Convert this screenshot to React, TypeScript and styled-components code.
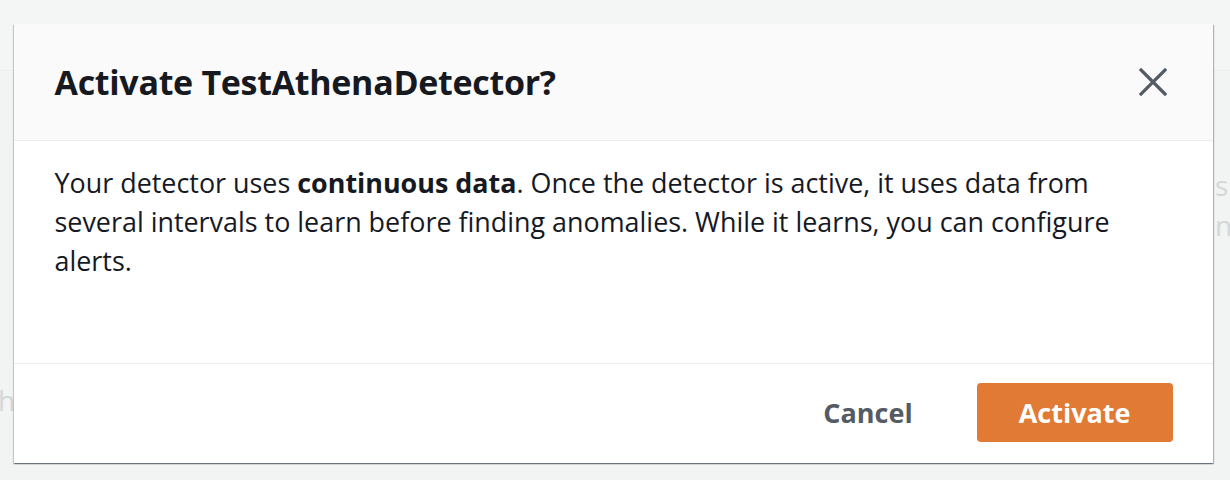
import React from "react";
import styled, { createGlobalStyle } from "styled-components";

const GlobalStyle = createGlobalStyle`
  html, body { margin: 0; padding: 0; }
  body {
    width: 1230px;
    height: 480px;
    overflow: hidden;
    background: #f2f3f3;
    font-family: "Open Sans", "Noto Sans", "Liberation Sans", sans-serif;
  }
`;

const Page = styled.div`
  position: relative;
  width: 1230px;
  height: 480px;
  overflow: hidden;
  background: #f2f3f3;
`;

const BackdropTop = styled.div`
  height: 70px;
  background: #f4f5f5;
  border-bottom: 1px solid #eceeee;
`;

const BackdropLines = styled.div`
  display: flex;
  flex-direction: column;
  padding: 96px 0 0 1215px;
  gap: 4px;
  font-size: 28px;
  line-height: 36px;
  color: #d3d7d7;
  white-space: nowrap;
`;

const BackdropLeft = styled.div`
  padding: 138px 0 0 0;
  margin-left: -2px;
  font-size: 28px;
  color: #d3d7d7;
`;

const Overlay = styled.div`
  position: absolute;
  inset: 0;
  display: flex;
  justify-content: center;
  padding-top: 24px;
`;

const Modal = styled.div`
  width: 1199px;
  height: 439px;
  margin-left: -4px;
  display: flex;
  flex-direction: column;
  background: #ffffff;
  box-shadow: 0 1px 1px 0 rgba(0, 28, 36, 0.35), 1px 1px 1px 0 rgba(0, 28, 36, 0.25),
    -1px 1px 1px 0 rgba(0, 28, 36, 0.15);
`;

const Header = styled.div`
  display: flex;
  align-items: center;
  justify-content: space-between;
  height: 117px;
  box-sizing: border-box;
  padding: 0 44px 0 41px;
  background: #fafafa;
  border-bottom: 1px solid #eaeded;
`;

const Title = styled.h2`
  margin: 0;
  font-size: 34px;
  line-height: 44px;
  font-weight: 700;
  color: #16191f;
  letter-spacing: -0.3px;
`;

const CloseButton = styled.button`
  display: flex;
  align-items: center;
  justify-content: center;
  width: 32px;
  height: 32px;
  padding: 0;
  border: none;
  background: transparent;
  cursor: pointer;
  color: #545b64;
`;

const Body = styled.div`
  flex: 1;
  padding: 22px 41px 0 41px;
  border-bottom: 1px solid #eaeded;
`;

const Text = styled.p`
  margin: 0;
  font-size: 26.9px;
  line-height: 39px;
  color: #16191f;
  max-width: 1110px;
  b { font-weight: 700; }
`;

const Footer = styled.div`
  display: flex;
  justify-content: flex-end;
  align-items: center;
  height: 99px;
  box-sizing: border-box;
  padding: 0 40px 2px 41px;
  gap: 24px;
`;

const Button = styled.button<{ $primary?: boolean }>`
  height: 59px;
  box-sizing: border-box;
  padding: 0 ${(p) => (p.$primary ? "42px" : "40px")};
  min-width: ${(p) => (p.$primary ? "195px" : "auto")};
  border: none;
  border-radius: 4px;
  font-family: inherit;
  font-size: 27px;
  font-weight: 700;
  cursor: pointer;
  background: ${(p) => (p.$primary ? "#e07a35" : "transparent")};
  color: ${(p) => (p.$primary ? "#ffffff" : "#545b64")};
`;

export default function App() {
  return (
    <>
      <GlobalStyle />
      <Page>
        <BackdropTop />
        <BackdropLines>
          <span>s:athena</span>
          <span>na</span>
        </BackdropLines>
        <BackdropLeft>h</BackdropLeft>
        <Overlay>
          <Modal role="dialog" aria-labelledby="modal-title">
            <Header>
              <Title id="modal-title">Activate TestAthenaDetector?</Title>
              <CloseButton aria-label="Close">
                <svg width="28" height="28" viewBox="0 0 28 28" fill="none">
                  <path d="M2 2L26 26M26 2L2 26" stroke="currentColor" strokeWidth="3.2" strokeLinecap="square" />
                </svg>
              </CloseButton>
            </Header>
            <Body>
              <Text>
                Your detector uses <b>continuous data</b>. Once the detector is active, it uses data from
                several intervals to learn before finding anomalies. While it learns, you can configure
                alerts.
              </Text>
            </Body>
            <Footer>
              <Button>Cancel</Button>
              <Button $primary>Activate</Button>
            </Footer>
          </Modal>
        </Overlay>
      </Page>
    </>
  );
}
